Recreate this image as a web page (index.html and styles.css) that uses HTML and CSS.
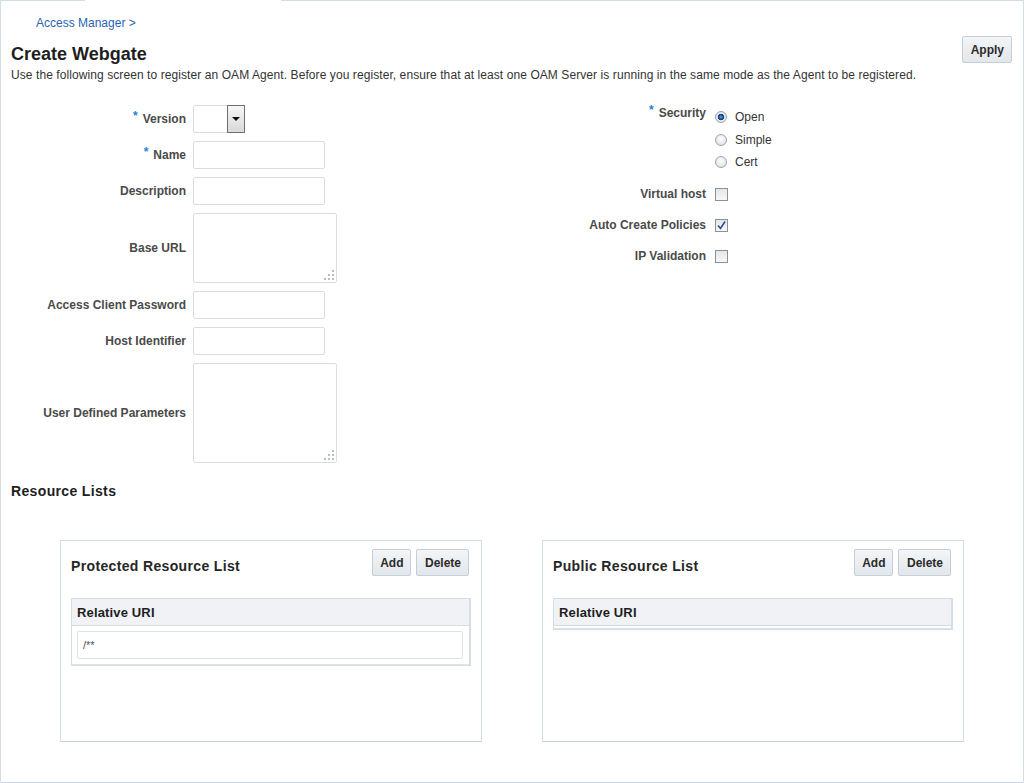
FILE: index.html
```html
<!DOCTYPE html>
<html lang="en">
<head>
<meta charset="UTF-8">
<title>Create Webgate</title>
<link rel="stylesheet" href="styles.css">
</head>
<body>
<div class="page">
	<span class="tab-gap"></span>

	<div class="crumb"><a href="#">Access Manager &gt;</a></div>

	<div class="title-row">
		<h1>Create Webgate</h1>
		<button class="btn">Apply</button>
	</div>
	<p class="intro">Use the following screen to register an OAM Agent. Before you register, ensure that at least one OAM Server is running in the same mode as the Agent to be registered.</p>

	<div class="form">
		<!-- left column: text fields -->
		<div class="form-left">
			<label class="lbl"><span class="req">*</span>Version</label>
			<div class="select"><span class="select-btn"><span class="tri"></span></span></div>

			<label class="lbl"><span class="req">*</span>Name</label>
			<input class="field" type="text">

			<label class="lbl">Description</label>
			<input class="field" type="text">

			<label class="lbl">Base URL</label>
			<div class="area-wrap">
				<textarea class="area"></textarea>
				<svg class="grip" width="12" height="12" viewBox="0 0 12 12"><rect x="9" y="1" width="2" height="2"/><rect x="5" y="5" width="2" height="2"/><rect x="9" y="5" width="2" height="2"/><rect x="1" y="9" width="2" height="2"/><rect x="5" y="9" width="2" height="2"/><rect x="9" y="9" width="2" height="2"/></svg>
			</div>

			<label class="lbl">Access Client Password</label>
			<input class="field" type="text">

			<label class="lbl">Host Identifier</label>
			<input class="field" type="text">

			<label class="lbl">User Defined Parameters</label>
			<div class="area-wrap">
				<textarea class="area area-tall"></textarea>
				<svg class="grip" width="12" height="12" viewBox="0 0 12 12"><rect x="9" y="1" width="2" height="2"/><rect x="5" y="5" width="2" height="2"/><rect x="9" y="5" width="2" height="2"/><rect x="1" y="9" width="2" height="2"/><rect x="5" y="9" width="2" height="2"/><rect x="9" y="9" width="2" height="2"/></svg>
			</div>
		</div>

		<!-- right column: security and flags -->
		<div class="form-right">
			<label class="lbl lbl-top"><span class="req">*</span>Security</label>
			<div class="radios">
				<div class="radio-row"><span class="radio on"></span>Open</div>
				<div class="radio-row"><span class="radio"></span>Simple</div>
				<div class="radio-row"><span class="radio"></span>Cert</div>
			</div>

			<label class="lbl">Virtual host</label>
			<div class="check-row"><span class="check"></span></div>

			<label class="lbl">Auto Create Policies</label>
			<div class="check-row">
				<span class="check">
					<svg width="11" height="11" viewBox="0 0 11 11"><path d="M2 5.5 L4.5 8.5 L9 1.5" fill="none" stroke="#2d4f8f" stroke-width="1.6"/></svg>
				</span>
			</div>

			<label class="lbl">IP Validation</label>
			<div class="check-row"><span class="check"></span></div>
		</div>
	</div>

	<h2 class="section">Resource Lists</h2>

	<div class="lists">
		<div class="panel">
			<div class="panel-head">
				<h3>Protected Resource List</h3>
				<div class="btns"><button class="btn">Add</button><button class="btn">Delete</button></div>
			</div>
			<div class="table">
				<div class="th">Relative URI</div>
				<div class="tr"><div class="cell">/**</div></div>
			</div>
		</div>

		<div class="panel">
			<div class="panel-head">
				<h3>Public Resource List</h3>
				<div class="btns"><button class="btn">Add</button><button class="btn">Delete</button></div>
			</div>
			<div class="table">
				<div class="th">Relative URI</div>
				<div class="tr-empty"></div>
			</div>
		</div>
	</div>
</div>
</body>
</html>
```

FILE: styles.css
```css
html, body{
	margin: 0;
	padding: 0;
	background: #fff;
}
body{
	font-family: "Liberation Sans", Arial, sans-serif;
	font-size: 12px;
	color: #333;
}
.page{
	position: relative;
	box-sizing: border-box;
	height: 783px;
	border: 1px solid #d3dde7;
	border-bottom-color: #cbd6e0;
	border-radius: 0 0 2px 2px;
}
/* the tab above joins the panel here */
.tab-gap{
	position: absolute;
	top: -1px;
	left: 84px;
	width: 196px;
	height: 1px;
	background: #fff;
}
.crumb{
	margin-top: 15px;
	padding-left: 35px;
	line-height: 14px;
}
.crumb a{
	color: #2a63b5;
	text-decoration: none;
}
.title-row{
	display: flex;
	justify-content: space-between;
	align-items: flex-start;
	margin-top: 6px;
	padding: 0 11px 0 10px;
}
h1{
	margin: 7px 0 0 0;
	font-size: 18px;
	line-height: 22px;
	color: #1e1e1e;
}
.btn{
	height: 27px;
	padding: 0 7px 0 7.5px;
	font-family: "Liberation Sans", Arial, sans-serif;
	font-size: 12px;
	font-weight: bold;
	color: #2b2b2b;
	background: linear-gradient(#f3f5f7, #e3e7eb);
	border: 1px solid #c5cdd5;
	border-radius: 2px;
}
.intro{
	margin: 3px 0 0 0;
	padding-left: 10px;
	line-height: 14px;
	letter-spacing: 0.08px;
}

/* form */
.form{
	display: flex;
	margin-top: 23px;
}
.form-left{
	width: 520px;
	display: grid;
	grid-template-columns: 185px auto;
	column-gap: 7px;
	row-gap: 8px;
	align-items: center;
	justify-items: start;
}
.lbl{
	justify-self: end;
	font-weight: bold;
	color: #4a4a4a;
	line-height: 14px;
	white-space: nowrap;
}
.req{
	display: inline-block;
	color: #2a7fd4;
	margin-right: 5px;
	transform: translateY(-3px);
}
.select{
	position: relative;
	box-sizing: border-box;
	width: 52px;
	height: 28px;
	border: 1px solid #d9dee3;
	border-radius: 2px;
	background: #fff;
}
.select-btn{
	position: absolute;
	top: -1px;
	right: -1px;
	box-sizing: border-box;
	width: 18px;
	height: 28px;
	border: 1px solid #6f6f6f;
	background: linear-gradient(#f6f6f6, #d9d9d9);
	display: flex;
	align-items: center;
	justify-content: center;
}
.tri{
	width: 0;
	height: 0;
	border-left: 4px solid transparent;
	border-right: 4px solid transparent;
	border-top: 4px solid #111;
}
.field{
	box-sizing: border-box;
	width: 132px;
	height: 28px;
	margin: 0;
	border: 1px solid #d9dee3;
	border-radius: 2px;
	background: #fff;
}
.area-wrap{
	position: relative;
	height: 70px;
}
.area{
	display: block;
	box-sizing: border-box;
	width: 144px;
	height: 70px;
	margin: 0;
	border: 1px solid #d9dee3;
	border-radius: 2px;
	resize: none;
}
.area-wrap:last-child{
	height: 100px;
}
.area-tall{
	height: 100px;
}
.grip{
	position: absolute;
	right: 2px;
	bottom: 2px;
	fill: #b9bcc0;
}

.form-right{
	display: grid;
	grid-template-columns: 185px auto;
	column-gap: 9px;
	row-gap: 11px;
	align-items: center;
	align-content: start;
}
.lbl-top{
	align-self: start;
	margin-top: 1px;
}
.radios{
	align-self: start;
}
.radio-row{
	display: flex;
	align-items: center;
	height: 23px;
	color: #333;
}
.radio-row:last-child{
	height: 22px;
}
.radio{
	box-sizing: border-box;
	width: 12px;
	height: 12px;
	margin-right: 8px;
	border: 1px solid #9ea4aa;
	border-radius: 50%;
	background: radial-gradient(circle at 50% 40%, #fdfdfd, #d9dcdf);
}
.radio.on{
	background: radial-gradient(circle, #4a86c8 0 1.2px, #1b4a80 2px 3px, #e9ecef 3.6px, #d9dcdf);
}
.check-row{
	height: 20px;
	display: flex;
	align-items: center;
}
.check{
	box-sizing: border-box;
	width: 13px;
	height: 13px;
	border: 1px solid #8c9196;
	background: linear-gradient(#e4e6e8, #f7f7f7);
	display: flex;
	align-items: center;
	justify-content: center;
}

/* resource lists */
.section{
	margin: 20px 0 0 0;
	padding-left: 10px;
	font-size: 14px;
	line-height: 16px;
	letter-spacing: 0.35px;
	color: #1e1e1e;
}
.lists{
	display: flex;
	gap: 60px;
	margin-top: 41px;
	padding-left: 59px;
}
.panel{
	box-sizing: border-box;
	width: 422px;
	height: 202px;
	border: 1px solid #d5dee7;
	border-bottom-color: #c6d1dc;
	padding: 8px 12px 0 10px;
}
.panel-head{
	display: flex;
	justify-content: space-between;
	align-items: flex-start;
	height: 27px;
}
h3{
	margin: 9px 0 0 0;
	font-size: 14px;
	line-height: 16px;
	letter-spacing: 0.35px;
	color: #262626;
}
.btns{
	display: flex;
	gap: 5px;
}
.table{
	width: 400px;
	box-sizing: border-box;
	margin-top: 22px;
	border: 1px solid #d5dde5;
	border-right-width: 2px;
}
.th{
	height: 26px;
	line-height: 27px;
	padding-left: 5px;
	font-size: 13px;
	font-weight: bold;
	letter-spacing: 0.15px;
	color: #1e1e1e;
	background: #f0f2f6;
	border-bottom: 1px solid #d3dbe3;
}
.tr{
	padding: 5px 6px 5px 5px;
	border-bottom: 1px solid #dfe5eb;
}
.cell{
	box-sizing: border-box;
	height: 28px;
	line-height: 26px;
	padding-left: 5px;
	font-size: 11px;
	color: #555;
	border: 1px solid #dde2e7;
	border-radius: 2px;
}
.tr-empty{
	height: 2px;
	border-bottom: 1px solid #d8dfe6;
}
```
